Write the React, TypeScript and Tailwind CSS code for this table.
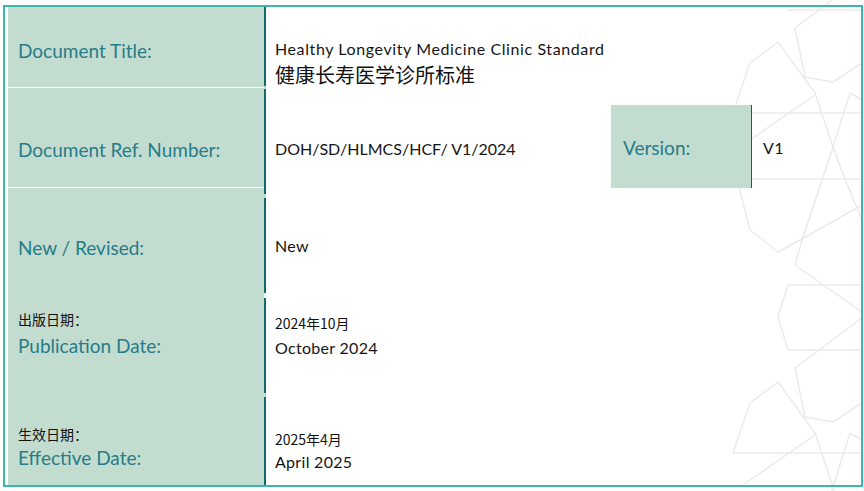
import React from 'react';

const label = "block text-[19px] leading-[22px] text-[#267c88] whitespace-nowrap";
const cjkLabel = "block text-[14px] leading-[18px] text-[#111] whitespace-nowrap font-['Noto_Sans_CJK_SC',sans-serif]";
const value = "block text-[16px] leading-[20px] text-[#151515] whitespace-nowrap tracking-[0.3px]";
const cjkValue = "block text-[14px] leading-[18px] text-[#111] whitespace-nowrap font-['Noto_Sans_CJK_SC',sans-serif]";

function Pattern() {
  // faint star pattern behind the right edge
  const lines = [
    '787,10 862,10',
    '795,28 862,-22',
    '795,28 805,77 833,82 862,63',
    '778,42 750,63 733,113 862,113',
    '778,42 815,93 833,147 845,179 862,220',
    '850,93 833,147 802,240 795,265 862,312',
    '815,95 740,147',
    '850,93 862,100',
    '862,179 737,179 750,230 763,240 778,252 800,240 862,205',
    '862,285 788,285 778,317 788,350 862,350',
    '862,318 795,368 805,417 833,422 862,403',
    '778,382 750,403 733,453 862,453',
    '778,382 815,433 833,487 840,510',
    '850,433 833,487 826,510',
    '815,435 740,487',
    '850,433 862,440',
  ];
  return (
    <svg className="absolute inset-0" width="864" height="491" viewBox="0 0 864 491" fill="none">
      {lines.map((p, i) => (
        <polyline key={i} points={p} stroke="#ebebeb" strokeWidth="1.5" strokeLinejoin="round" />
      ))}
    </svg>
  );
}

export default function App() {
  return (
    <div className="relative w-[864px] h-[491px] bg-white overflow-hidden font-['Lato',sans-serif]">
      <Pattern />
      <div className="relative ml-[3px] mt-[5px] w-[860px] h-[482px] border-2 border-[#3ab8aa] flex">
        {/* label column */}
        <div className="w-[259px] pl-[3px] flex flex-col">
          <div className="h-[80px] bg-[#c3dcd0] pl-[10px] pt-[33px]">
            <span className={label}>Document Title:</span>
          </div>
          <div className="h-px bg-white" />
          <div className="h-[99px] bg-[#c3dcd0] pl-[10px] pt-[51px]">
            <span className={label}>Document Ref. Number:</span>
          </div>
          <div className="h-px bg-white" />
          <div className="flex-1 bg-[#c3dcd0] pl-[10px] pt-[49px]">
            <span className={label}>New / Revised:</span>
            <span className={`${cjkLabel} mt-[51px]`}>出版日期：</span>
            <span className={`${label} mt-[7px]`}>Publication Date:</span>
            <span className={`${cjkLabel} mt-[68px]`}>生效日期：</span>
            <span className={`${label} mt-[4px]`}>Effective Date:</span>
          </div>
        </div>

        {/* divider */}
        <div className="w-[2px] flex flex-col bg-[#c3dcd0]">
          <div className="h-[79px] bg-[#106a6e]" />
          <div className="h-[3px]" />
          <div className="h-[105px] bg-[#106a6e]" />
          <div className="h-[4px]" />
          <div className="h-[95px] bg-[#106a6e]" />
          <div className="h-[5px] bg-white" />
          <div className="h-[95px] bg-[#106a6e]" />
          <div className="h-[4px]" />
          <div className="flex-1 bg-[#106a6e]" />
        </div>

        {/* values */}
        <div className="flex-1 flex flex-col pl-[9px]">
          <div className="h-[82px] pt-[32px]">
            <span className={`${value} tracking-[0.6px]`}>Healthy Longevity Medicine Clinic Standard</span>
            <span className="block mt-[4px] text-[20px] leading-[24px] text-[#111] whitespace-nowrap font-['Noto_Sans_CJK_SC',sans-serif]">
              健康长寿医学诊所标准
            </span>
          </div>
          <div className="h-[109px] flex items-start">
            <div className="w-[336px] pt-[50px]">
              <span className="block text-[16px] leading-[20px] text-[#151515] whitespace-nowrap">DOH/SD/HLMCS/HCF/ V1/2024</span>
            </div>
            <div className="mt-[16px] h-[83px] w-[141px] bg-[#c3dcd0] border-r border-[#0f5f66] pl-[12px] pt-[32px]">
              <span className={label}>Version:</span>
            </div>
            <div className="pl-[11px] pt-[49px]">
              <span className={value}>V1</span>
            </div>
          </div>
          <div className="h-[100px] pt-[38px]">
            <span className={value}>New</span>
          </div>
          <div className="h-[99px] pt-[16px]">
            <span className={cjkValue}>2024年10月</span>
            <span className={`${value} mt-[6px]`}>October 2024</span>
          </div>
          <div className="flex-1 pt-[33px]">
            <span className={cjkValue}>2025年4月</span>
            <span className={`${value} mt-[4px]`}>April 2025</span>
          </div>
        </div>
      </div>
    </div>
  );
}
